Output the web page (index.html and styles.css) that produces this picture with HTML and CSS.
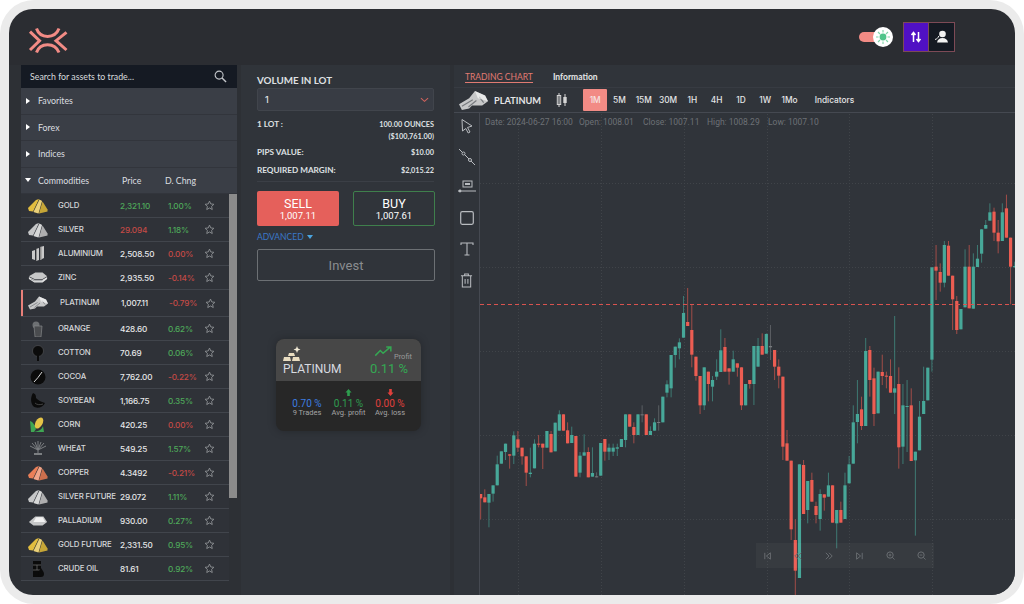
FILE: index.html
```html
<!DOCTYPE html>
<html lang="en">
<head>
<meta charset="utf-8">
<title>Trading platform</title>
<link rel="stylesheet" href="styles.css">
</head>
<body>
<svg class="defs" width="0" height="0" aria-hidden="true">
  <defs>
    <symbol id="ingot" viewBox="0 0 20 16">
      <path d="M0 10 8 2 11 1 5 13.500 1 13z" fill="currentColor"/>
      <path d="M5.500 14 11.500 1.500 14 3 10.500 15.500z" fill="currentColor"/>
      <path d="M5.500 14 11.500 1.500 14 3 10.500 15.500z" fill="#fff" fill-opacity=".3"/>
      <path d="M11 15.500 14.500 3.500 19.500 11.500 19.500 13.500z" fill="currentColor"/>
      <path d="M11 15.500 14.500 3.500 19.500 11.500 19.500 13.500z" fill="#000" fill-opacity=".12"/>
    </symbol>
    <symbol id="bars" viewBox="0 0 20 13">
      <path d="M0 9 7 5 11 0 18 3 20 7 16 10 9 10 7 12 2 13z" fill="currentColor"/>
      <path d="M2 10.500 9.500 6M6.500 11 12 6.500M14 4 17 8" stroke="#777a7e" stroke-width=".8" fill="none"/>
      <path d="M11 0 18 3 20 7 13 5z" fill="#fff" fill-opacity=".6"/>
    </symbol>
    <symbol id="flatbar" viewBox="0 0 22 14">
      <path d="M1 8 8 2h9l4 6-5 4H6z" fill="currentColor"/>
      <path d="M6 8 9 3h7l3 5z" fill="#f2f2f2"/>
    </symbol>
    <symbol id="plates" viewBox="0 0 22 14">
      <path d="M1 5 8 1h8l5 4-5 3H7z" fill="currentColor"/>
      <path d="M1 6l6 3 9 0 5-3v2l-5 4H7L1 8z" fill="#e4e4e4"/>
      <path d="M7 10h9M3 8l4 2" stroke="#6f7276" stroke-width=".7" fill="none"/>
    </symbol>
    <symbol id="star" viewBox="0 0 12 12">
      <path d="M6 1.200 7.400 4.300l3.400.4-2.500 2.300.7 3.400L6 8.700l-3 1.700.7-3.400L1.200 4.700l3.400-.4z" fill="none" stroke="#8d9094" stroke-width="1"/>
    </symbol>
  </defs>
</svg>
<div class="frame">
  <header class="topbar">
    <svg class="logo" viewBox="0 0 40 27" width="40" height="27">
      <path d="M8.500 1.500C12 12 27 12 31 1.500M8.500 25.500C12 15 27 15 31 25.500M2 4.700 11.500 13.700 2 23M38.500 5.300 28 13.700 38.500 23" fill="none" stroke="#f28b85" stroke-width="3"/>
    </svg>
    <div class="top-actions">
      <div class="toggle">
        <span class="toggle-track"></span>
        <span class="toggle-knob">
          <svg viewBox="0 0 16 16" width="16" height="16">
            <circle cx="8" cy="8" r="3.400" fill="#4fc48a"/>
            <path d="M8 1v2.500M8 12.500V15M1 8h2.500M12.500 8H15M3 3l2 2M11 11l2 2M13 3l-2 2M5 11l-2 2" stroke="#7fd5a8" stroke-width="1.100"/>
          </svg>
        </span>
      </div>
      <div class="mode-group">
        <button class="mode mode-on">
          <svg viewBox="0 0 14 14" width="14" height="14"><path d="M4.500 12V2.500M2.500 5 4.500 2.500 6.500 5M9.500 2v9.500M7.500 9l2 2.500 2-2.500" fill="none" stroke="#fff" stroke-width="1.500"/></svg>
        </button>
        <button class="mode">
          <svg viewBox="0 0 16 14" width="16" height="14"><circle cx="8.500" cy="4" r="3.300" fill="#f2f2f2"/><path d="M3 12.500c.5-3 2.500-4.500 5.500-4.500s5 1.500 5.500 4.500z" fill="#f2f2f2"/><path d="M1 9.500C3 9 4 8 4.800 6" stroke="#f2f2f2" fill="none"/></svg>
        </button>
      </div>
    </div>
  </header>

  <main class="workspace">
    <aside class="assets">
      <div class="search">
        <span>Search for assets to trade...</span>
        <svg viewBox="0 0 14 14" width="13" height="13"><circle cx="5.500" cy="5.500" r="4.300" fill="none" stroke="#c4c7cb" stroke-width="1.200"/><path d="M8.700 8.700 13 13" stroke="#c4c7cb" stroke-width="1.500"/></svg>
      </div>
      <div class="group"><i class="caret"></i>Favorites</div>
      <div class="group"><i class="caret"></i>Forex</div>
      <div class="group"><i class="caret"></i>Indices</div>
      <div class="group group-open"><i class="caret caret-down"></i><span class="group-name">Commodities</span><span class="col-price">Price</span><span class="col-chg">D. Chng</span></div>
      <div class="list-wrap">
        <div class="list">
          <div class="row"><svg class="ico gold"><use href="#ingot"/></svg><span class="name">GOLD</span><span class="price up">2,321.10</span><span class="chg up">1.00%</span><svg class="star"><use href="#star"/></svg></div>
          <div class="row"><svg class="ico silver"><use href="#ingot"/></svg><span class="name">SILVER</span><span class="price down">29.094</span><span class="chg up">1.18%</span><svg class="star"><use href="#star"/></svg></div>
          <div class="row"><svg class="ico" viewBox="0 0 20 16"><path d="M4 5l3-1v10l-3-1zM8 3l3-1v12l-3 1zM12 1l4-1v12l-4 2z" fill="#c9c9c9"/><path d="M12 1h1.500v13H12zM8 3h1v12H8z" fill="#8d8d8d"/></svg><span class="name">ALUMINIUM</span><span class="price">2,508.50</span><span class="chg down">0.00%</span><svg class="star"><use href="#star"/></svg></div>
          <div class="row"><svg class="ico silver"><use href="#plates"/></svg><span class="name">ZINC</span><span class="price">2,935.50</span><span class="chg down">-0.14%</span><svg class="star"><use href="#star"/></svg></div>
          <div class="row row-active"><svg class="ico silver"><use href="#bars"/></svg><span class="name">PLATINUM</span><span class="price">1,007.11</span><span class="chg down">-0.79%</span><svg class="star"><use href="#star"/></svg></div>
          <div class="row"><svg class="ico" viewBox="0 0 20 16"><circle cx="8" cy="4" r="3.500" fill="#6d7073"/><path d="M6 5h8l-1 11H7z" fill="#4a4c4f" stroke="#85888a" stroke-width=".7"/></svg><span class="name">ORANGE</span><span class="price">428.60</span><span class="chg up">0.62%</span><svg class="star"><use href="#star"/></svg></div>
          <div class="row"><svg class="ico" viewBox="0 0 20 16"><circle cx="10" cy="6" r="5.500" fill="#0b0b0b" stroke="#55585b" stroke-width=".6"/><path d="M10 8v8" stroke="#0b0b0b" stroke-width="2"/></svg><span class="name">COTTON</span><span class="price">70.69</span><span class="chg up">0.06%</span><svg class="star"><use href="#star"/></svg></div>
          <div class="row"><svg class="ico" viewBox="0 0 20 16"><circle cx="10" cy="8" r="7.500" fill="#0b0b0b"/><path d="M6 13Q10 9 14 3" stroke="#d8d8d8" stroke-width="1" fill="none"/></svg><span class="name">COCOA</span><span class="price">7,762.00</span><span class="chg down">-0.22%</span><svg class="star"><use href="#star"/></svg></div>
          <div class="row"><svg class="ico" viewBox="0 0 20 16"><path d="M5 0c3 1 3 3 3 5 2 2 5 4 9 5-2 5-9 6-12 3-2-3-3-8 0-13z" fill="#0b0b0b"/><path d="M7 10c2 2 5 2 8 1" stroke="#666" stroke-width=".6" fill="none"/></svg><span class="name">SOYBEAN</span><span class="price">1,166.75</span><span class="chg up">0.35%</span><svg class="star"><use href="#star"/></svg></div>
          <div class="row"><svg class="ico" viewBox="0 0 20 16"><path d="M2 4c3 1 5 4 6 8l-2 3H3zM15 9c-1 3-3 5-9 6h10z" fill="#3fa653"/><ellipse cx="11" cy="6" rx="3.500" ry="6" transform="rotate(30 11 6)" fill="#e5c447"/></svg><span class="name">CORN</span><span class="price">420.25</span><span class="chg down">0.00%</span><svg class="star"><use href="#star"/></svg></div>
          <div class="row"><svg class="ico" viewBox="0 0 20 16"><path d="M10 14V7M10 9 4 2M10 9 7 1M10 9V0M10 9l3-8M10 9l6-7M10 9 2 5M10 9l8-4" stroke="#7c7f82" stroke-width="1" fill="none"/><path d="M6 13h8" stroke="#7c7f82" stroke-width="2"/></svg><span class="name">WHEAT</span><span class="price">549.25</span><span class="chg up">1.57%</span><svg class="star"><use href="#star"/></svg></div>
          <div class="row"><svg class="ico copper"><use href="#ingot"/></svg><span class="name">COPPER</span><span class="price">4.3492</span><span class="chg down">-0.21%</span><svg class="star"><use href="#star"/></svg></div>
          <div class="row"><svg class="ico silver"><use href="#ingot"/></svg><span class="name">SILVER FUTURE</span><span class="price">29.072</span><span class="chg up">1.11%</span><svg class="star"><use href="#star"/></svg></div>
          <div class="row"><svg class="ico silver"><use href="#flatbar"/></svg><span class="name">PALLADIUM</span><span class="price">930.00</span><span class="chg up">0.27%</span><svg class="star"><use href="#star"/></svg></div>
          <div class="row"><svg class="ico gold"><use href="#ingot"/></svg><span class="name">GOLD FUTURE</span><span class="price">2,331.50</span><span class="chg up">0.95%</span><svg class="star"><use href="#star"/></svg></div>
          <div class="row"><svg class="ico" viewBox="0 0 20 16"><path d="M5 0h8v16H5z" fill="#0b0b0b"/><path d="M5 4h8M5 9h8M9 4v5" stroke="#6a6a6a" stroke-width=".8"/><path d="M13 7c2 3 3 4 3 6a3 3 0 0 1-6 0c0-2 1-3 3-6z" fill="#0b0b0b"/></svg><span class="name">CRUDE OIL</span><span class="price">81.61</span><span class="chg up">0.92%</span><svg class="star"><use href="#star"/></svg></div>
        </div>
        <div class="scroll"><div class="thumb"></div></div>
      </div>
    </aside>

    <section class="trade">
      <div class="vol-label">VOLUME IN LOT</div>
      <div class="select"><span>1</span><svg viewBox="0 0 10 6" width="9" height="6"><path d="M1 1l4 3.500L9 1" fill="none" stroke="#d0625c" stroke-width="1.200"/></svg></div>
      <div class="spec spec-lot"><span>1 LOT :</span><span class="spec-val">100.00 OUNCES<br>($100,761.00)</span></div>
      <div class="spec spec-pips"><span>PIPS VALUE:</span><span class="spec-val">$10.00</span></div>
      <div class="spec spec-last"><span>REQUIRED MARGIN:</span><span class="spec-val">$2,015.22</span></div>
      <div class="actions">
        <button class="act act-sell"><b>SELL</b><small>1,007.11</small></button>
        <button class="act act-buy"><b>BUY</b><small>1,007.61</small></button>
      </div>
      <div class="advanced">ADVANCED <i></i></div>
      <button class="invest">Invest</button>
      <div class="card">
        <div class="card-top">
          <div class="card-title">
            <svg viewBox="0 0 20 17" width="20" height="17"><path d="M6 7h5l1 3H5zM1 11h6l1 4H0zM10 11h6l1 4H9z" fill="#e8dcc0"/><path d="M14 0l1 2.500L17.500 3.500 15 4.500 14 7l-1-2.500L10.500 3.500 13 2.500z" fill="#f2ead6"/></svg>
            <span>PLATINUM</span>
          </div>
          <div class="card-profit">
            <div class="profit-head">
              <svg viewBox="0 0 20 12" width="19" height="11"><path d="M1 10.500 6.500 5l3 3L17 1.500M13 1h5v5" fill="none" stroke="#35a853" stroke-width="1.600"/></svg>
              <small>Profit</small>
            </div>
            <span>0.11 %</span>
          </div>
        </div>
        <div class="card-stats">
          <div class="stat stat-blue"><i class="stat-gap"></i><b>0.70 %</b><small>9 Trades</small></div>
          <div class="stat stat-green"><svg viewBox="0 0 8 8" width="7" height="7"><path d="M4 0l3.500 4H5.500v4h-3V4H.5z" fill="#2e9e4f"/></svg><b>0.11 %</b><small>Avg. profit</small></div>
          <div class="stat stat-red"><svg viewBox="0 0 8 8" width="7" height="7"><path d="M4 8 .5 4h2V0h3v4h2z" fill="#e0403c"/></svg><b>0.00 %</b><small>Avg. loss</small></div>
        </div>
      </div>
    </section>

    <section class="chart-panel">
      <nav class="tabs"><span class="tab tab-on">TRADING CHART</span><span class="tab">Information</span></nav>
      <div class="toolbar">
        <svg class="sym-ico silver"><use href="#bars"/></svg>
        <span class="sym">PLATINUM</span>
        <svg class="candle-ico" viewBox="0 0 12 14" width="12" height="14"><path d="M3 0v14M9 1v12" stroke="#d5d5d5"/><rect x="1.300" y="2.500" width="3.400" height="9" fill="none" stroke="#d5d5d5"/><rect x="7.300" y="4" width="3.400" height="6" fill="#d5d5d5"/></svg>
        <div class="frames">
          <span class="tf tf-on">1M</span><span class="tf">5M</span><span class="tf">15M</span><span class="tf">30M</span><span class="tf">1H</span><span class="tf">4H</span><span class="tf">1D</span><span class="tf">1W</span><span class="tf">1Mo</span>
        </div>
        <span class="indicators">Indicators</span>
      </div>
      <div class="chart-body">
        <div class="tools">
          <svg viewBox="0 0 16 16" width="16" height="16"><path d="M3 1.500 13 8 8.500 9.500 11 14l-1.800 1L6.800 10.500 3.500 13z" fill="none" stroke="#b9bcc0" stroke-width="1"/></svg>
          <svg viewBox="0 0 18 18" width="18" height="18"><path d="M1 1 17 17" stroke="#b9bcc0"/><circle cx="5.500" cy="5.500" r="1.500" fill="#30343a" stroke="#b9bcc0"/><circle cx="12" cy="12" r="1.500" fill="#30343a" stroke="#b9bcc0"/></svg>
          <svg viewBox="0 0 18 14" width="18" height="14"><path d="M0 12h18" stroke="#b9bcc0"/><circle cx="2" cy="12" r="1.400" fill="#b9bcc0"/><rect x="5" y="2" width="9" height="6" fill="none" stroke="#b9bcc0"/><path d="M7 5h5" stroke="#b9bcc0" stroke-width="2"/></svg>
          <svg viewBox="0 0 14 14" width="14" height="14"><rect x=".7" y=".7" width="12.600" height="12.600" rx="1.500" fill="none" stroke="#b9bcc0" stroke-width="1.200"/></svg>
          <svg viewBox="0 0 14 14" width="14" height="14"><path d="M1 3V1h12v2M7 1v12M4.500 13h5" fill="none" stroke="#b9bcc0" stroke-width="1.100"/></svg>
          <svg viewBox="0 0 14 16" width="13" height="15"><path d="M1 3h12M5 3V1h4v2M2.500 3v12h9V3M5.500 6.500v5M8.500 6.500v5" fill="none" stroke="#b9bcc0" stroke-width="1.100"/></svg>
        </div>
        <div class="canvas">
          <svg id="plot" class="plot" viewBox="480 113 535 482" width="535" height="482"></svg>
          <div class="ohlc"><span class="o-date">Date: 2024-06-27 16:00</span><span class="o-open">Open: 1008.01</span><span class="o-close">Close: 1007.11</span><span class="o-high">High: 1008.29</span><span>Low: 1007.10</span></div>
          <div class="nav-strip">
            <svg viewBox="0 0 10 10" width="8" height="8"><path d="M1 1v8M8 1 3 5l5 4z" fill="none" stroke="#6a6e72" stroke-width="1.200"/></svg>
            <svg viewBox="0 0 10 10" width="8" height="8"><path d="M5 1 1 5l4 4M9 1 5 5l4 4" fill="none" stroke="#6a6e72" stroke-width="1.200"/></svg>
            <svg viewBox="0 0 10 10" width="8" height="8"><path d="M1 1l4 4-4 4M5 1l4 4-4 4" fill="none" stroke="#6a6e72" stroke-width="1.200"/></svg>
            <svg viewBox="0 0 10 10" width="8" height="8"><path d="M9 1v8M2 1l5 4-5 4z" fill="none" stroke="#6a6e72" stroke-width="1.200"/></svg>
            <svg viewBox="0 0 10 10" width="9" height="9"><circle cx="4.500" cy="4.500" r="3.500" fill="none" stroke="#6a6e72" stroke-width="1.100"/><path d="M7 7l2.500 2.500M3 4.500h3M4.500 3v3" stroke="#6a6e72"/></svg>
            <svg viewBox="0 0 10 10" width="9" height="9"><circle cx="4.500" cy="4.500" r="3.500" fill="none" stroke="#6a6e72" stroke-width="1.100"/><path d="M7 7l2.500 2.500M3 4.500h3" stroke="#6a6e72"/></svg>
          </div>
        </div>
      </div>
    </section>
  </main>
</div>
<script src="chart.js"></script>
</body>
</html>
```

FILE: styles.css
```css
* { box-sizing: border-box; }
html, body { margin: 0; padding: 0; }
body {
  width: 1024px;
  height: 604px;
  overflow: hidden;
  background: #fff;
  font-family: "Inter", "Liberation Sans", sans-serif;
}
.defs { display: block; height: 0; }
button { font: inherit; padding: 0; cursor: default; }

.frame {
  width: 1024px;
  height: 604px;
  padding: 9px;
  background: #ebebeb;
  border-radius: 34px;
}
.topbar {
  height: 56px;
  width: 1006px;
  background: #2b2d32;
  border-radius: 24px 24px 0 0;
  display: flex;
  align-items: flex-start;
  justify-content: space-between;
  padding: 18px 60px 0 19px;
}
.logo { display: block; }
.top-actions { display: flex; align-items: center; gap: 10px; margin-top: -5px; }
.toggle { width: 34px; height: 20px; display: flex; align-items: center; }
.toggle-track { width: 21px; height: 10px; border-radius: 5px; background: #f28b85; }
.toggle-knob {
  width: 20px; height: 20px; margin-left: -7px;
  border-radius: 50%; background: #fff;
  display: flex; align-items: center; justify-content: center;
}
.mode-group { display: flex; border: 1px solid #7d4a56; }
.mode {
  width: 25px; height: 28px; border: 0; background: #151a23;
  display: flex; align-items: center; justify-content: center;
}
.mode-on { background: #5010c4; border-right: 1px solid #7d4a56; width: 25px; }

.workspace {
  width: 1006px;
  height: 530px;
  display: flex;
  background: #2d3035;
  border-radius: 0 0 24px 24px;
  overflow: hidden;
  padding-left: 12px;
}

/* Assets column */
.assets { width: 216px; flex: none; font-family: "Lato", "Liberation Sans", sans-serif; }
.search {
  height: 23px; background: #151a23; color: #d9dbdd;
  font-size: 8.800px; display: flex; align-items: center; justify-content: space-between;
  padding: 0 10px 0 9px;
}
.group {
  height: 26.500px; background: #3a3e46; border-bottom: 1px solid #32353c;
  color: #dcdee0; font-size: 8.800px; display: flex; align-items: center; padding-left: 5px;
}
.caret {
  width: 0; height: 0; margin-right: 8px;
  border-left: 4px solid #fff; border-top: 3.500px solid transparent; border-bottom: 3.500px solid transparent;
}
.caret-down {
  margin-left: -1px; margin-right: 7px;
  border-top: 4px solid #fff; border-bottom: 0;
  border-left: 3.500px solid transparent; border-right: 3.500px solid transparent;
}
.group-name { width: 84px; }
.col-price { width: 43px; }
.list-wrap { display: flex; height: 402px; }
.list { width: 208px; flex: none; }
.scroll { width: 8px; }
.thumb { height: 304px; background: #8b8b8b; }
.row {
  height: 24px; display: flex; align-items: center;
  border-bottom: 1px solid #41454c; background: #2f3238;
  font-family: "Inter", "Liberation Sans", sans-serif; font-size: 8.200px; color: #e6e7e8;
  padding-left: 7px; position: relative;
}
.ico { width: 20px; height: 16px; flex: none; margin-right: 10px; }
.gold { color: #e2bd3f; }
.silver { color: #c6c7c8; }
.copper { color: #ea7f58; }
.name { width: 62px; flex: none; white-space: nowrap; color: #d6d8da; font-size: 7.800px; font-weight: 500; letter-spacing: -.12px; margin-top: -2px; }
.price { width: 48px; flex: none; font-weight: 500; letter-spacing: -.15px; }
.chg { width: 36px; flex: none; font-weight: 500; letter-spacing: -.15px; }
.up { color: #4ea85a; }
.down { color: #c44a46; }
.star { width: 11px; height: 11px; flex: none; }
.row-active { height: 27px; padding-left: 7px; box-shadow: inset 2px 0 0 #e8807a; }
.row-active .name { margin-left: 2px; width: 61px; }
.row-active .price { width: 48px; }

/* Trade column */
.trade { width: 209px; flex: none; padding: 9px 16px 0 16px; margin-left: 4px; background: #30343a; color: #dfe0e2; position: relative; font-family: "Lato", "Liberation Sans", sans-serif; }
.vol-label { font-size: 9.800px; line-height: 13px; font-weight: 700; }
.select {
  margin-top: 1px; height: 23px; width: 177px; background: #383c44; border: 1px solid #41454c; border-radius: 2px;
  font: 500 9px "Inter", sans-serif; display: flex; align-items: center; justify-content: space-between; padding: 0 4px 0 7px;
}
.spec { display: flex; justify-content: space-between; width: 177px; font-size: 8.200px; font-weight: 700; line-height: 11px; margin-top: 6px; }
.spec-lot { margin-top: 8px; align-items: flex-start; }
.spec-pips { margin-top: 4px; }
.spec-val { text-align: right; line-height: 12px; font-size: 7.300px; }
.spec-last { padding-bottom: 4px; border-bottom: 1px solid #3b3f46; }
.actions { display: flex; justify-content: space-between; width: 178px; margin-top: 9px; }
.act {
  width: 82px; height: 35px; border-radius: 2px; color: #fff;
  display: flex; flex-direction: column; align-items: center; justify-content: center; font-family: "Roboto", sans-serif;
}
.act b { font-weight: 400; font-size: 12.500px; line-height: 13px; }
.act small { font-size: 9.500px; line-height: 11px; font-weight: 400; }
.act-sell { background: #e5605b; border: 0; }
.act-buy { background: transparent; border: 1px solid #3f7f4c; }
.advanced { margin-top: 6px; font-size: 8.500px; line-height: 10px; color: #3a78c8; display: flex; align-items: center; gap: 2px; }
.advanced i { width: 0; height: 0; border: 3.500px solid transparent; border-top: 4px solid #4aa5e0; border-bottom: 0; margin-left: 1px; }
.invest {
  display: block; margin-top: 7px; width: 178px; height: 32px; background: transparent;
  border: 1px solid #6c7074; border-radius: 2px; color: #8a8d90; font: 13px "Roboto", sans-serif;
}
.card {
  width: 145px; height: 92px; margin: 58px 0 0 19px; border-radius: 8px; overflow: hidden;
  background: #272727; box-shadow: 0 0 8px rgba(0,0,0,.25); font-family: "Roboto", sans-serif;
}
.card-top { height: 42px; background: #474747; display: flex; justify-content: space-between; padding: 7px 13px 0 7px; }
.card-title { display: flex; flex-direction: column; align-items: flex-start; }
.card-title span { font-size: 12px; line-height: 13px; margin-top: 0; color: #d8dbe0; }
.card-profit { display: flex; flex-direction: column; align-items: flex-end; color: #34a853; font-size: 13px; line-height: 14px; }
.profit-head { display: flex; align-items: flex-start; gap: 1px; height: 16px; margin-right: -4px; }
.profit-head small { font-size: 7.500px; line-height: 9px; color: #9a9a9a; margin-top: 6px; }
.card-stats { display: flex; justify-content: space-between; padding: 8px 11px 0; }
.stat { display: flex; flex-direction: column; align-items: center; width: 40px; }
.stat svg, .stat-gap { display: block; height: 7px; width: 7px; }
.stat b { font-weight: 400; font-size: 10px; line-height: 11px; margin-top: 2px; }
.stat small { font-size: 7.500px; line-height: 8px; color: #a4a4a4; white-space: nowrap; }
.stat-blue b { color: #3c7de0; }
.stat-green b { color: #2e9e4f; }
.stat-red b { color: #e0403c; }

/* Chart column */
.chart-panel { width: 561px; flex: none; margin-left: 4px; background: #30343a; display: flex; flex-direction: column; overflow: hidden; }
.tabs { height: 23px; display: flex; align-items: center; gap: 20px; padding: 2px 0 0 11px; border-bottom: 1px solid #373b42; font-family: "Lato", sans-serif; font-size: 8.500px; font-weight: 700; color: #e4e5e6; }
.tab-on { color: #e07a72; font-weight: 400; border-bottom: 1px solid #e07a72; line-height: 10px; margin-top: 1px; }
.toolbar { height: 25px; display: flex; align-items: center; border-bottom: 1px solid #454951; padding-left: 5px; color: #e4e5e6; font-family: "Inter", sans-serif; font-size: 8.300px; font-weight: 500; }
.sym-ico { width: 29px; height: 19px; flex: none; }
.sym { width: 62px; margin-left: 6px; font-family: "Lato", sans-serif; font-weight: 700; font-size: 9.200px; }
.candle-ico { flex: none; margin-right: 15px; }
.frames { display: flex; }
.tf { width: 24.300px; height: 22px; display: flex; align-items: center; justify-content: center; }
.tf-on { background: #f28b85; border-radius: 1px; color: #f6e4e2; }
.indicators { margin-left: 13px; }
.chart-body { flex: 1; display: flex; min-height: 0; }
.tools {
  width: 26px; flex: none; border-right: 1px solid #454951;
  display: flex; flex-direction: column; align-items: center; padding-top: 5px;
}
.tools svg { margin-bottom: 17px; flex: none; }
.tools svg:nth-child(1) { margin-bottom: 14px; }
.tools svg:nth-child(2) { margin-bottom: 13px; }
.tools svg:nth-child(3) { margin-bottom: 18px; }
.canvas { position: relative; flex: 1; min-width: 0; }
.plot { display: block; }
.plot .grid { stroke: #404449; stroke-width: 1; stroke-dasharray: 1 2; }
.plot .last { stroke: #d9534f; stroke-width: 1; stroke-dasharray: 4 3; }
.ohlc { position: absolute; left: 5px; top: 4px; font: 8.500px/11px "Roboto", sans-serif; color: #6d7176; display: flex; white-space: nowrap; }
.o-date { width: 94px; }
.o-open { width: 64px; }
.o-close { width: 64px; }
.o-high { width: 61px; }
.nav-strip {
  position: absolute; left: 276px; top: 430px; width: 178px; height: 25px;
  background: rgba(255,255,255,.035);
  display: flex; align-items: center; justify-content: space-between; padding: 0 8px;
}
```

FILE: chart.js
```js
(function () {
  var NS = "http://www.w3.org/2000/svg";
  var plot = document.getElementById("plot");
  var GREEN = "#47a899", RED = "#ec5d52", GRAY = "#777b7e";

  // [colour, high, bodyTop, bodyBottom, low]; y values measured on a 3x scale
  var partA = [
    "r,612,612,625,688","r,598,622,637,637","g,612,612,638,712","g,586,586,611,635","g,497,523,586,586","g,484,484,521,521",
    "g,461,461,486,510","r,492,493,497,536","g,424,436,497,522","r,423,448,473,486","r,473,473,499,524","r,499,499,548,588",
    "g,473,548,552,562","g,448,461,535,535","r,435,461,463,472","r,461,461,473,537","g,423,423,473,473","r,423,432,487,487",
    "g,398,398,484,484","g,361,373,422,422","r,373,373,422,422","r,397,421,460,460","g,410,435,459,459","r,438,438,560,560",
    "g,486,497,548,562","g,433,487,497,497","r,472,486,562,562","g,472,549,560,560","n,547,559,561,562","g,459,459,557,557",
    "r,447,447,485,512","g,461,473,485,510","g,461,473,485,498","g,461,472,476,498","g,447,447,471,471","g,373,373,450,472",
    "r,373,373,410,410","r,397,411,435,460","g,373,373,435,435","n,346,373,375,397","r,373,373,435,435","g,409,423,435,435",
    "g,385,397,422,422","n,346,396,398,422","g,320,320,397,397","g,271,283,308,322","g,195,195,295,322","g,170,170,195,233",
    "g,145,157,175,208","g,18,69,143,143","r,-6,96,108,108","r,44,120,194,232","r,200,200,258,272","r,258,258,346,372",
    "g,232,232,346,360","r,245,245,282,334","g,258,270,290,334","g,208,245,260,270","g,118,181,246,246","r,144,171,245,245",
    "r,235,235,245,284","g,182,208,245,245","r,220,220,233,260","r,232,232,346,360","g,282,282,346,346"
  ];
  var partB = [
    "r,600,600,612,626","g,498,498,612,675","g,474,498,560,560","r,460,498,524,524","g,460,462,521,521","n,435,498,502,540",
    "r,510,510,560,600","r,538,560,587,625","r,590,590,800,840","r,750,790,842,842","r,842,842,1048,1080","r,1018,1080,1172,1250",
    "g,853,853,1194,1194","r,840,855,1002,1002","g,903,903,990,1030","r,878,900,965,965","r,965,978,1005,1030","g,928,942,1017,1052",
    "r,943,943,953,992","g,878,916,950,950","r,916,916,1028,1028","g,990,990,1030,1105","r,965,990,1028,1028","g,878,916,1017,1017",
    "g,828,853,910,910","g,676,727,851,851","g,600,702,726,790","r,650,688,738,750","g,474,513,738,738","r,498,510,600,650",
    "r,563,595,702,738","g,575,575,700,700","r,524,576,588,615","r,575,587,589,625","r,538,588,638,638","g,408,625,638,702",
    "r,562,612,802,866","g,612,676,800,852","g,600,678,680,816","r,625,676,843,843","g,815,815,841,1067","g,663,710,811,811",
    "g,560,663,702,702","g,563,563,661,661","g,262,262,539,575","r,195,260,272,360","r,250,276,308,335","g,183,195,308,322",
    "r,183,197,287,287","r,287,287,358,450","r,348,363,450,462","g,387,387,448,448","g,208,260,382,382","r,195,260,385,385",
    "g,220,260,386,386","g,195,236,261,261","g,147,148,221,248","g,120,135,146,146","g,70,97,122,122","r,83,95,158,183",
    "r,120,158,184,220","g,70,97,183,183","r,44,85,173,173","r,173,173,260,373","g,245,258,262,262"
  ];

  function el(name, attrs) {
    var node = document.createElementNS(NS, name);
    Object.keys(attrs).forEach(function (k) { node.setAttribute(k, attrs[k]); });
    plot.appendChild(node);
    return node;
  }

  [183.5, 267.5, 351.5, 435.5, 519.5].forEach(function (y) {
    el("line", { x1: 480, x2: 1015, y1: y, y2: y, "class": "grid" });
  });
  [518.5, 601.5, 684.5, 767.5, 849.5, 932.5].forEach(function (x) {
    el("line", { x1: x, x2: x, y1: 114, y2: 595, "class": "grid" });
  });

  function draw(row, index, base) {
    var p = row.split(",");
    var col = p[0] === "g" ? GREEN : p[0] === "r" ? RED : GRAY;
    var x = 480.67 + index * 4.14;
    var conv = function (v) { return base + (+v) / 3; };
    var hi = conv(p[1]), top = conv(p[2]), bot = conv(p[3]), lo = conv(p[4]);
    el("line", { x1: x, x2: x, y1: hi, y2: lo, stroke: col, "stroke-width": 1, "stroke-opacity": 0.6 });
    el("rect", { x: x - 1.6, y: top, width: 3.2, height: Math.max(bot - top, 1), fill: col });
  }
  partA.forEach(function (row, i) { draw(row, i, 290); });
  partB.forEach(function (row, i) { draw(row, i + partA.length, 180); });

  el("line", { x1: 480, x2: 1015, y1: 304.5, y2: 304.5, "class": "last" });
})();
```
